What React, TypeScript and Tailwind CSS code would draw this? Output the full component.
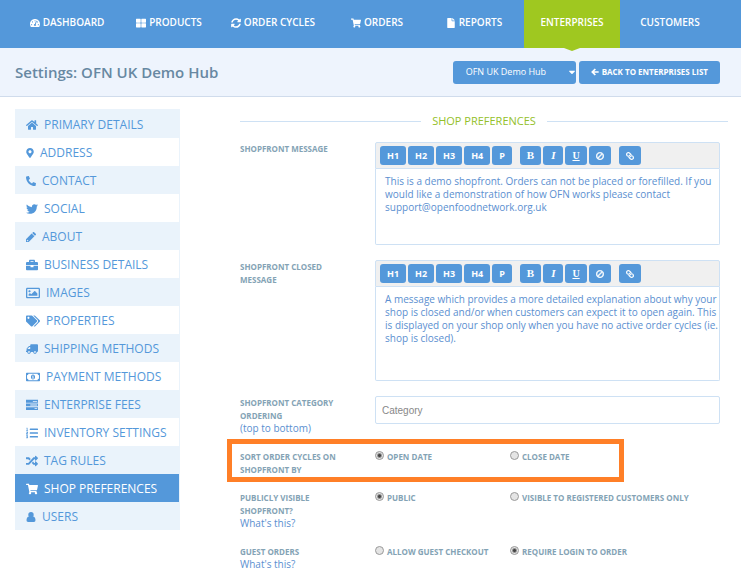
import type { ComponentType, ReactNode } from "react";
import {
  FaBan,
  FaBriefcase,
  FaCaretDown,
  FaFile,
  FaHome,
  FaLink,
  FaListOl,
  FaMapMarkerAlt,
  FaPhoneAlt,
  FaRandom,
  FaRegImage,
  FaRegMoneyBillAlt,
  FaShoppingCart,
  FaSyncAlt,
  FaTachometerAlt,
  FaTags,
  FaThLarge,
  FaTruck,
  FaTwitter,
} from "react-icons/fa";

type IconProps = { className?: string };
type Icon = ComponentType<IconProps>;

function TasksIcon({ className }: IconProps) {
  return (
    <svg className={className} viewBox="0 0 14 12" fill="currentColor" aria-hidden="true">
      <path
        fillRule="evenodd"
        d="M0 0h14v3.300H0zM0 4.300h14v3.300H0zM0 8.600h14v3.300H0zM8 1.200v1h5v-1zM5 5.500v1h8v-1zM10 9.800v1h3v-1z"
      />
    </svg>
  );
}

function UserIcon({ className }: IconProps) {
  return (
    <svg className={className} viewBox="0 0 12 13" fill="currentColor" aria-hidden="true">
      <circle cx="6" cy="3.500" r="3.500" />
      <path d="M3 6C.8 6.400.2 9 .2 10.800c0 1.300.8 2.100 2 2.100h7.600c1.200 0 2-.8 2-2.100C11.800 9 11.200 6.400 9 6z" />
    </svg>
  );
}

function PencilIcon({ className }: IconProps) {
  return (
    <svg className={className} viewBox="0 0 12 12" fill="currentColor" aria-hidden="true">
      <path
        fillRule="evenodd"
        d="M0 12V8.700l6.800-6.800 3.300 3.300L3.300 12zM1 9.800v.8h.6v.6h.8l.6-.7L1.700 9.200zM7.400 1.300 8.500.3c.4-.4.9-.4 1.300 0l1.900 1.900c.4.400.4.900 0 1.300l-1 1.100z"
      />
    </svg>
  );
}

function ArrowLeftIcon({ className }: IconProps) {
  return (
    <svg className={className} viewBox="0 0 12 12" aria-hidden="true">
      <path d="M6.500 1.500 2 6l4.500 4.500M2.500 6H11.500" fill="none" stroke="currentColor" strokeWidth="2.600" />
    </svg>
  );
}

const navItems: { label: string; icon?: Icon; active?: boolean }[] = [
  { label: "DASHBOARD", icon: FaTachometerAlt },
  { label: "PRODUCTS", icon: FaThLarge },
  { label: "ORDER CYCLES", icon: FaSyncAlt },
  { label: "ORDERS", icon: FaShoppingCart },
  { label: "REPORTS", icon: FaFile },
  { label: "ENTERPRISES", active: true },
  { label: "CUSTOMERS" },
];

const sideItems: { label: string; icon: Icon; size: string; active?: boolean }[] = [
  { label: "PRIMARY DETAILS", icon: FaHome, size: "w-3 h-3" },
  { label: "ADDRESS", icon: FaMapMarkerAlt, size: "w-2 h-2.5" },
  { label: "CONTACT", icon: FaPhoneAlt, size: "w-2.5 h-2.5" },
  { label: "SOCIAL", icon: FaTwitter, size: "w-3 h-3" },
  { label: "ABOUT", icon: PencilIcon, size: "w-2.5 h-2.5" },
  { label: "BUSINESS DETAILS", icon: FaBriefcase, size: "w-3 h-3" },
  { label: "IMAGES", icon: FaRegImage, size: "w-3.5 h-3.5" },
  { label: "PROPERTIES", icon: FaTags, size: "w-3.5 h-3" },
  { label: "SHIPPING METHODS", icon: FaTruck, size: "w-3 h-3 -scale-x-100" },
  { label: "PAYMENT METHODS", icon: FaRegMoneyBillAlt, size: "w-3.5 h-3.5" },
  { label: "ENTERPRISE FEES", icon: TasksIcon, size: "w-3 h-3" },
  { label: "INVENTORY SETTINGS", icon: FaListOl, size: "w-3 h-3" },
  { label: "TAG RULES", icon: FaRandom, size: "w-3 h-3" },
  { label: "SHOP PREFERENCES", icon: FaShoppingCart, size: "w-3 h-3", active: true },
  { label: "USERS", icon: UserIcon, size: "w-2.5 h-2.5" },
];

function ToolButton({ label, children }: { label: string; children: ReactNode }) {
  return (
    <button
      type="button"
      aria-label={label}
      className="flex h-[19px] items-center justify-center rounded-[3px] bg-[#5498da] px-[7px] text-[9px] font-bold text-white"
    >
      {children}
    </button>
  );
}

function Editor({ id, value, height }: { id: string; value: string; height: string }) {
  return (
    <div className="min-w-0 flex-1">
      <div className="flex h-[27px] items-center gap-[2px] rounded-t-[2px] border border-[#cee1f4] bg-[#f0f0f0] px-1">
        {["H1", "H2", "H3", "H4", "P"].map((t) => (
          <ToolButton key={t} label={t}>
            {t}
          </ToolButton>
        ))}
        <div className="ml-1.5 flex gap-[2px] font-['Liberation_Serif',serif]">
          <ToolButton label="Bold">
            <span className="text-[11px]">B</span>
          </ToolButton>
          <ToolButton label="Italic">
            <span className="px-px text-[11px] italic">I</span>
          </ToolButton>
          <ToolButton label="Underline">
            <span className="text-[10px] underline">U</span>
          </ToolButton>
          <ToolButton label="Clear formatting">
            <FaBan className="h-2 w-2 -scale-x-100 stroke-white stroke-[30px]" />
          </ToolButton>
        </div>
        <div className="ml-1.5 flex">
          <ToolButton label="Link">
            <FaLink className="h-2 w-2 -scale-x-100" />
          </ToolButton>
        </div>
      </div>
      <textarea
        id={id}
        defaultValue={value}
        className={`${height} block w-full resize-none rounded-b-[2px] border border-t-0 border-[#cee1f4] bg-white py-1.5 pr-0 pl-[9px] text-[10px] leading-[13px] text-[#5b8fd0] outline-none`}
      />
    </div>
  );
}

function Label({ text, htmlFor }: { text: string; htmlFor?: string }) {
  const style = "block text-[8px] leading-[13px] font-bold text-[#84a3b5]";
  return htmlFor ? (
    <label htmlFor={htmlFor} className={style}>
      {text}
    </label>
  ) : (
    <div className={style}>{text}</div>
  );
}

function Row({ label, children }: { label: ReactNode; children: ReactNode }) {
  return (
    <div className="flex">
      <div className="w-[135px] shrink-0 pr-6">{label}</div>
      {children}
    </div>
  );
}

function Radios({ name, options, selected }: { name: string; options: string[]; selected: number }) {
  return (
    <div className="grid min-w-0 flex-1 grid-cols-[135px_1fr] items-start">
      {options.map((o, i) => (
        <label key={o} className="flex gap-[3px] text-[8px] leading-[13px] font-bold whitespace-nowrap text-[#84a3b5]">
          <input
            type="radio"
            name={name}
            defaultChecked={i === selected}
            className="mt-px h-[9px] w-[9px] shrink-0 appearance-none rounded-full border border-[#9a9a9a] bg-[#e4e4e4] checked:bg-[radial-gradient(circle,#444_0_1px,#e4e4e4_3px)]"
          />
          {o}
        </label>
      ))}
    </div>
  );
}

function Help() {
  return (
    <a href="#help" className="block text-[10px] leading-[13px] text-[#5b8fd0]">
      What's this?
    </a>
  );
}

export default function App() {
  return (
    <div className="min-h-screen bg-white font-['Open_Sans',sans-serif]">
      <nav className="grid h-12 grid-cols-[110fr_94fr_114fr_94fr_100fr_96fr_100fr] bg-[#5498da] pr-[21px] pl-3">
        {navItems.map(({ label, icon: I, active }) => (
          <a
            key={label}
            href="#nav"
            className={`relative flex items-center justify-center gap-[3px] pb-[3px] text-[10px] font-semibold whitespace-nowrap text-white ${active ? "bg-[#9fc820]" : ""}`}
          >
            {I && <I className="h-2.5 w-2.5" />}
            {label}
            {active && (
              <svg className="absolute top-full left-1/2 h-[3px] w-4 -translate-x-1/2" viewBox="0 0 16 3" aria-hidden="true">
                <path d="M0 0h16L8 3z" fill="#9fc820" />
              </svg>
            )}
          </a>
        ))}
      </nav>

      <header className="flex h-[49px] items-center border-b border-[#d0dcec] bg-[#eef4fd] pr-[21px] pl-[15px]">
        <h1 className="flex-1 text-[15px] font-semibold text-[#6788a2]">Settings: OFN UK Demo Hub</h1>
        <div className="flex items-center gap-[3px]">
          <div className="relative">
            <select
              aria-label="Enterprise"
              className="block h-[23px] w-[123px] appearance-none rounded-[3px] bg-[#5498da] pl-[13px] text-[9px] text-white"
            >
              <option>OFN UK Demo Hub</option>
            </select>
            <FaCaretDown className="pointer-events-none absolute top-[6px] right-0 h-2.5 w-2 text-white" />
          </div>
          <button type="button" className="flex h-[23px] items-center gap-[3px] rounded-[3px] bg-[#5498da] px-3 text-[8px] font-bold text-white">
            <ArrowLeftIcon className="h-2 w-2" />
            BACK TO ENTERPRISES LIST
          </button>
        </div>
      </header>

      <div className="flex gap-[60px] pt-3 pr-[13px] pl-[15px]">
        <aside className="w-[165px] shrink-0 self-start border-t border-r border-[#eaf3fb]">
          {sideItems.map(({ label, icon: I, size, active }) => (
            <a
              key={label}
              href="#section"
              className={`flex h-7 items-center gap-1.5 pt-0.5 pl-[11px] text-[12px] whitespace-nowrap ${
                active ? "bg-[#5498da] text-white" : "text-[#5498da] odd:bg-[#eaf3fb]"
              }`}
            >
              <I className={size} />
              {label}
            </a>
          ))}
        </aside>

        <main className="min-w-0 flex-1 pt-[3px]">
          <h2 className="flex items-center gap-[11px] text-[11px] leading-[18px] text-[#94bf2a] before:h-px before:flex-1 before:bg-[#cee1f4] after:h-px after:flex-1 after:bg-[#cee1f4]">
            SHOP PREFERENCES
          </h2>
          <form className="flex flex-col gap-[15px] pt-3 pr-2">
            <Row label={<Label htmlFor="message" text="SHOPFRONT MESSAGE" />}>
              <Editor
                id="message"
                height="h-[76px]"
                value="This is a demo shopfront. Orders can not be placed or forefilled. If you would like a demonstration of how OFN works please contact support@openfoodnetwork.org.uk"
              />
            </Row>
            <Row label={<Label htmlFor="closed" text="SHOPFRONT CLOSED MESSAGE" />}>
              <Editor
                id="closed"
                height="h-[94px]"
                value="A message which provides a more detailed explanation about why your shop is closed and/or when customers can expect it to open again. This is displayed on your shop only when you have no active order cycles (ie. shop is closed)."
              />
            </Row>
            <Row
              label={
                <>
                  <Label htmlFor="category" text="SHOPFRONT CATEGORY ORDERING" />
                  <div className="text-[10px] leading-[13px] text-[#5b8fd0]">(top to bottom)</div>
                </>
              }
            >
              <input
                id="category"
                type="text"
                placeholder="Category"
                className="h-7 min-w-0 flex-1 rounded-[2px] border border-[#cee1f4] px-1.5 font-['Liberation_Sans',sans-serif] text-[10px] outline-none placeholder:text-[#888]"
              />
            </Row>
            <div className="relative">
              <Row label={<Label text="SORT ORDER CYCLES ON SHOPFRONT BY" />}>
                <Radios name="sort" options={["OPEN DATE", "CLOSE DATE"]} selected={0} />
              </Row>
              <div className="pointer-events-none absolute -top-[11px] -left-[13px] h-[43px] w-[397px] border-5 border-[#ff7f27]" />
            </div>
            <Row
              label={
                <>
                  <Label text="PUBLICLY VISIBLE SHOPFRONT?" />
                  <Help />
                </>
              }
            >
              <Radios name="visible" options={["PUBLIC", "VISIBLE TO REGISTERED CUSTOMERS ONLY"]} selected={0} />
            </Row>
            <Row
              label={
                <>
                  <Label text="GUEST ORDERS" />
                  <Help />
                </>
              }
            >
              <Radios name="guest" options={["ALLOW GUEST CHECKOUT", "REQUIRE LOGIN TO ORDER"]} selected={1} />
            </Row>
          </form>
        </main>
      </div>
    </div>
  );
}
